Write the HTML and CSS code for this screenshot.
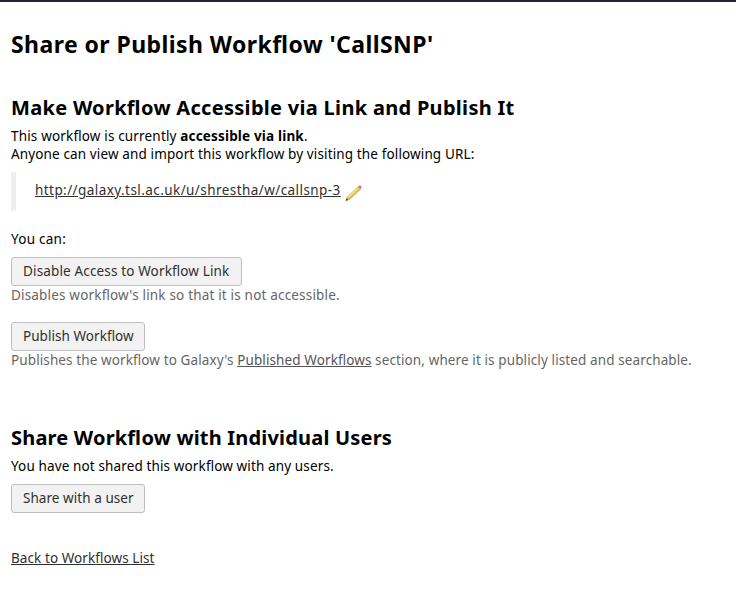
FILE: index.html
```html
<!DOCTYPE html>
<html lang="en">
<head>
<meta charset="utf-8">
<title>Share or Publish Workflow</title>
<link rel="stylesheet" href="styles.css">
</head>
<body>
<main>
<h2>Share or Publish Workflow 'CallSNP'</h2>
<section class="access">
<h3>Make Workflow Accessible via Link and Publish It</h3>
<p class="current">This workflow is currently <strong>accessible via link</strong>.</p>
<p class="anyone">Anyone can view and import this workflow by visiting the following URL:</p>
<blockquote><a href="#" class="url">http://galaxy.tsl.ac.uk/u/shrestha/w/callsnp-3</a><svg class="pencil" viewBox="0 0 18 18"><path d="M1 16.5L2.3 13L13.2 2.6L15.8 5L4.8 15.2Z" fill="#dccb50" stroke="#a89a48" stroke-width=".7"/><path d="M3.4 13L13 3.8" stroke="#f4eb9d" stroke-width="1.1"/><path d="M13.1 2.8L14.4 1.5Q16.8 1.2 16.7 3.6L15.5 5Z" fill="#de7775"/><path d="M12.4 3.2L15 5.6" stroke="#b9bdc0" stroke-width="1"/><path d="M.8 16.8L1.6 14.4L3.3 16Z" fill="#333"/></svg></blockquote>
<p class="can">You can:</p>
<button class="disable">Disable Access to Workflow Link</button>
<p class="help disables">Disables workflow's link so that it is not accessible.</p>
<button class="publish">Publish Workflow</button>
<p class="help publishes">Publishes the workflow to Galaxy's <a href="#">Published Workflows</a> section, where it is publicly listed and searchable.</p>
</section>
<section class="users">
<h3>Share Workflow with Individual Users</h3>
<p class="unshared">You have not shared this workflow with any users.</p>
<button class="share">Share with a user</button>
</section>
<a class="back" href="#">Back to Workflows List</a>
</main>
</body>
</html>
```
FILE: styles.css
```css
*{box-sizing:border-box}
body{margin:0;background:#fff;color:#000;border-top:2px solid #242238;font:13.5px/18px "Noto Sans","Open Sans",sans-serif;font-feature-settings:"liga" 1}
main{padding:27px 11px 0}
h2,h3,p,blockquote{margin:0;white-space:nowrap}
h2{font-size:23px;line-height:30px;letter-spacing:.43px}
h3{font-size:20px;line-height:26px;margin-bottom:6px;letter-spacing:.3px}
.access{margin-top:36px}
.current{letter-spacing:.17px}
.anyone{letter-spacing:.13px}
a{color:#303030;text-decoration:underline}
blockquote{height:39px;margin:9px 0 19px;border-left:5px solid #eee;padding:9px 0 0 19px;display:flex}
.url{letter-spacing:.43px}
.pencil{width:18px;height:18px;margin:3px 0 0 4px}
.can{margin-bottom:9px;letter-spacing:.26px}
button{display:block;height:29px;padding:0 11px 1px;border:1px solid #bfbfbf;border-radius:3px;background:#f2f2f2;color:#303030;font:inherit;letter-spacing:.06px;font-feature-settings:inherit;text-align:left;white-space:nowrap}
.help{color:#666}
.help a{color:#555}
.disable{width:231px;letter-spacing:.15px}
.disables{margin-bottom:18px;letter-spacing:.18px}
.publish,.share{width:134px}
.publish{letter-spacing:.05px}
.publishes{letter-spacing:.11px}
.users{margin-top:56px}
.users h3{letter-spacing:.19px}
.unshared{letter-spacing:.13px}
.share{margin-top:9px}
.back{display:inline-block;margin-top:36px;letter-spacing:.08px}
```
